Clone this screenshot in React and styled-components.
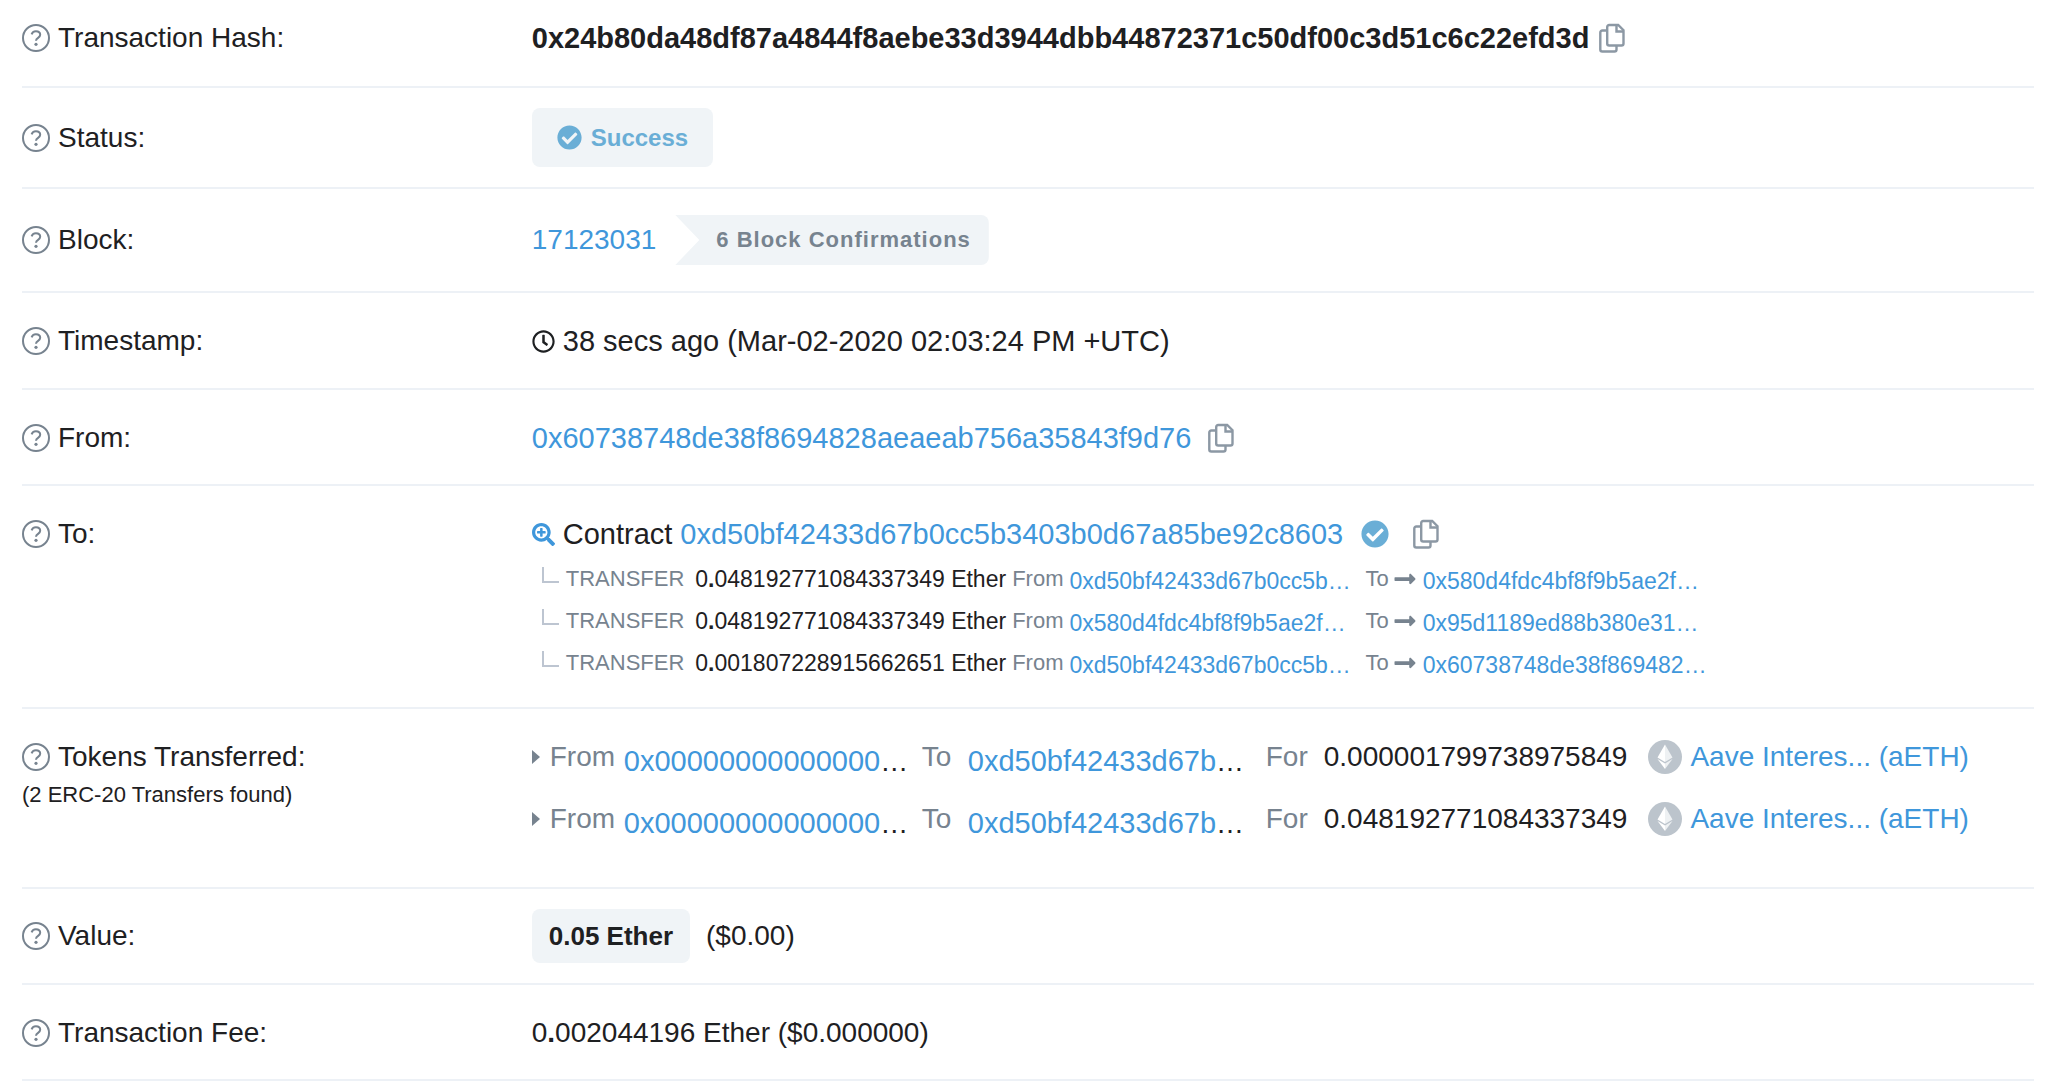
import React from 'react'
import styled, { createGlobalStyle } from 'styled-components'
import { FaCheckCircle, FaRegClock, FaSearchPlus, FaLongArrowAltRight } from 'react-icons/fa'

const GlobalStyle = createGlobalStyle`
  * {
    box-sizing: border-box;
  }
  body {
    margin: 0;
    background: #fff;
    color: #1e2022;
    font-family: "Liberation Sans", Arial, sans-serif;
    font-size: 28px;
    line-height: 42px;
  }
`

const internalTransfers = [
  { amount: '048192771084337349', from: '0xd50bf42433d67b0cc5b…', to: '0x580d4fdc4bf8f9b5ae2f…' },
  { amount: '048192771084337349', from: '0x580d4fdc4bf8f9b5ae2f…', to: '0x95d1189ed88b380e31…' },
  { amount: '001807228915662651', from: '0xd50bf42433d67b0cc5b…', to: '0x60738748de38f869482…' },
]

const tokenTransfers = [
  { from: '0x00000000000000', to: '0xd50bf42433d67b', amount: '0.000001799738975849' },
  { from: '0x00000000000000', to: '0xd50bf42433d67b', amount: '0.048192771084337349' },
]

function HelpIcon() {
  return (
    <HelpSvg viewBox="0 0 28 28" aria-hidden="true">
      <circle cx="14" cy="14" r="13" />
      <path d="M9.600 10.400c.6-2 2.200-3.100 4.300-3.100 2.500 0 4.300 1.400 4.300 3.500 0 3.200-4.200 2.900-4.200 6" />
      <circle className="dot" cx="14" cy="20.300" r="1.600" />
    </HelpSvg>
  )
}

function CopyButton() {
  return (
    <IconButton type="button" aria-label="Copy to clipboard">
      <svg width="26" height="30" viewBox="0 0 26 30" fill="none" stroke="currentColor" strokeWidth="2.400">
        <path d="M10.200 2h9L24.500 7.200V20.500a2 2 0 0 1-2 2H10.200a2 2 0 0 1-2-2V4a2 2 0 0 1 2-2z" />
        <path d="M17.500 2v6.500h7" />
        <path d="M8 7.500H3.300a2 2 0 0 0-2 2V26.500a2 2 0 0 0 2 2h12.200a2 2 0 0 0 2-2v-4" />
      </svg>
    </IconButton>
  )
}

function EthIcon() {
  return (
    <svg width="34" height="34" viewBox="0 0 34 34" aria-hidden="true">
      <circle cx="17" cy="17" r="17" fill="#bcc4cc" />
      <path d="M17 4.500l-7.500 13L17 22z" fill="#fff" />
      <path d="M17 4.500l7.500 13L17 22z" fill="#eef1f3" />
      <path d="M9.500 19L17 23.500V29z" fill="#fff" />
      <path d="M24.500 19L17 23.500V29z" fill="#eef1f3" />
    </svg>
  )
}

function Item({ label, note, pad, top, children }) {
  return (
    <Row $pad={pad} $top={top}>
      <div>
        <LabelLine><HelpIcon />{label}</LabelLine>
        {note && <Note>{note}</Note>}
      </div>
      <Value>{children}</Value>
    </Row>
  )
}

function App() {
  return (
    <>
      <GlobalStyle />
      <Details>
        <Item label="Transaction Hash:" pad="17px 0 27px">
          <Line $gap="10px">
            <Hash>0x24b80da48df87a4844f8aebe33d3944dbb44872371c50df00c3d51c6c22efd3d</Hash>
            <CopyButton />
          </Line>
        </Item>

        <Item label="Status:" pad="20px 0">
          <Success><FaCheckCircle size={25} />Success</Success>
        </Item>

        <Item label="Block:" pad="26px 0">
          <Line $gap="19px">
            <Link href="#block">17123031</Link>
            <Confirmations>6 Block Confirmations</Confirmations>
          </Line>
        </Item>

        <Item label="Timestamp:" pad="27px 0 26px">
          <Line $gap="8px">
            <FaRegClock size={23} />
            <Large>38 secs ago (Mar-02-2020 02:03:24 PM +UTC)</Large>
          </Line>
        </Item>

        <Item label="From:">
          <Line $gap="17px">
            <Address href="#from">0x60738748de38f8694828aeaeab756a35843f9d76</Address>
            <CopyButton />
          </Line>
        </Item>

        <Item label="To:" pad="27px 0 23px" top>
          <Line $gap="8px">
            <Blue><FaSearchPlus size={23} /></Blue>
            <Large>Contract</Large>
            <Address href="#contract">0xd50bf42433d67b0cc5b3403b0d67a85be92c8603</Address>
            <Verified><FaCheckCircle size={28} /></Verified>
            <CopyButton />
          </Line>
          <Transfers>
            {internalTransfers.map((t, i) => (
              <Transfer key={i}>
                <Branch />
                <Kind>TRANSFER</Kind>
                <Ether>0<b>.</b>{t.amount} Ether</Ether>
                <Muted>From</Muted>
                <TransferLink href="#from" $width="288px">{t.from}</TransferLink>
                <Muted>To</Muted>
                <Arrow><FaLongArrowAltRight size={24} /></Arrow>
                <TransferLink href="#to">{t.to}</TransferLink>
              </Transfer>
            ))}
          </Transfers>
        </Item>

        <Item label="Tokens Transferred:" note="(2 ERC-20 Transfers found)" pad="27px 0 47px" top>
          <Tokens>
            {tokenTransfers.map((t, i) => (
              <Token key={i}>
                <Caret />
                <Word $width="74px">From</Word>
                <Truncated><Address href="#from">{t.from}</Address>…</Truncated>
                <Word $width="46px">To</Word>
                <Truncated><Address href="#to">{t.to}</Address>…</Truncated>
                <Word $width="58px">For</Word>
                <Amount>{t.amount}</Amount>
                <EthIcon />
                <TokenName href="#token">Aave Interes... (aETH)</TokenName>
              </Token>
            ))}
          </Tokens>
        </Item>

        <Item label="Value:" pad="20px 0">
          <Line $gap="16px">
            <EtherBadge>0.05 Ether</EtherBadge>
            ($0.00)
          </Line>
        </Item>

        <Item label="Transaction Fee:">
          0<b>.</b>002044196 Ether ($0.000000)
        </Item>
      </Details>
    </>
  )
}

export default App;

const Details = styled.main`
  padding: 0 14px 0 22px;
`
const Row = styled.section`
  display: grid;
  grid-template-columns: 1fr 3fr;
  column-gap: 9px;
  align-items: ${(p) => (p.$top ? 'start' : 'center')};
  padding: ${(p) => p.$pad || '27px 0 25px'};
  border-bottom: 2px solid #edf1f6;
`
const LabelLine = styled.div`
  display: flex;
  align-items: center;
  gap: 8px;
  white-space: nowrap;
`
const Note = styled.small`
  display: block;
  font-size: 22px;
  line-height: 34px;
`
const HelpSvg = styled.svg`
  width: 28px;
  height: 28px;
  fill: none;
  stroke: #77838f;
  stroke-width: 2;

  .dot {
    fill: #77838f;
    stroke: none;
  }
`
const Value = styled.div`
  min-width: 0;
`
const Line = styled.div`
  display: flex;
  align-items: center;
  gap: ${(p) => p.$gap};
  white-space: nowrap;
`
const Large = styled.span`
  font-size: 29px;
`
const Hash = styled(Large)`
  font-weight: bold;
`
const Link = styled.a`
  color: #3f97db;
  text-decoration: none;
`
const Address = styled(Link)`
  font-size: 29px;
`
const IconButton = styled.button`
  display: flex;
  padding: 0;
  border: none;
  background: none;
  color: #8c98a4;
  cursor: pointer;
`
const Badge = styled.span`
  display: inline-flex;
  align-items: center;
  vertical-align: top;
  background: #f0f4f7;
  border-radius: 8px;
  font-weight: bold;
`
const Success = styled(Badge)`
  gap: 9px;
  height: 59px;
  padding: 0 25px;
  color: #6aaed6;
  font-size: 24px;
`
const EtherBadge = styled(Badge)`
  height: 54px;
  padding: 0 17px;
  font-size: 26px;
`
const Confirmations = styled(Badge)`
  height: 50px;
  padding: 0 18px 0 41px;
  color: #77838f;
  font-size: 22px;
  letter-spacing: 1px;
  clip-path: polygon(0 0, 100% 0, 100% 100%, 0 100%, 24px 50%);
  border-radius: 0 8px 8px 0;
`
const Blue = styled.span`
  display: flex;
  color: #3f97db;
`
const Verified = styled.span`
  display: flex;
  margin: 0 16px 0 10px;
  color: #6aaed6;
`
const Transfers = styled.ul`
  list-style: none;
  margin: 3px 0 0;
  padding: 0 0 0 10px;
`
const Transfer = styled.li`
  display: flex;
  align-items: center;
  height: 42px;
  white-space: nowrap;
  font-size: 23px;
`
const Branch = styled.span`
  width: 17px;
  height: 16px;
  margin: 0 7px 8px 0;
  border-left: 2px solid #bdc5d1;
  border-bottom: 2px solid #bdc5d1;
`
const Muted = styled.span`
  color: #77838f;
  font-size: 22px;
`
const Kind = styled(Muted)`
  margin-right: 11px;
`
const Ether = styled.span`
  margin-right: 6px;
`
const TransferLink = styled(Link)`
  width: ${(p) => p.$width || 'auto'};
  margin: 0 8px 0 6px;
  padding-top: 3px;
`
const Arrow = styled(Muted)`
  display: flex;
  margin-left: 4px;
`
const Tokens = styled.ul`
  display: flex;
  flex-direction: column;
  gap: 20px;
  list-style: none;
  margin: 0;
  padding: 0;
`
const Token = styled.li`
  display: flex;
  align-items: center;
  height: 42px;
  white-space: nowrap;
`
const Caret = styled.span`
  margin-right: 10px;
  border-left: 8px solid #77838f;
  border-top: 7px solid transparent;
  border-bottom: 7px solid transparent;
`
const Word = styled.span`
  width: ${(p) => p.$width};
  color: #77838f;
`
const Truncated = styled.span`
  width: 298px;
  padding-top: 8px;
`
const Amount = styled.span`
  margin-right: 21px;
`
const TokenName = styled(Link)`
  margin-left: 8px;
`
